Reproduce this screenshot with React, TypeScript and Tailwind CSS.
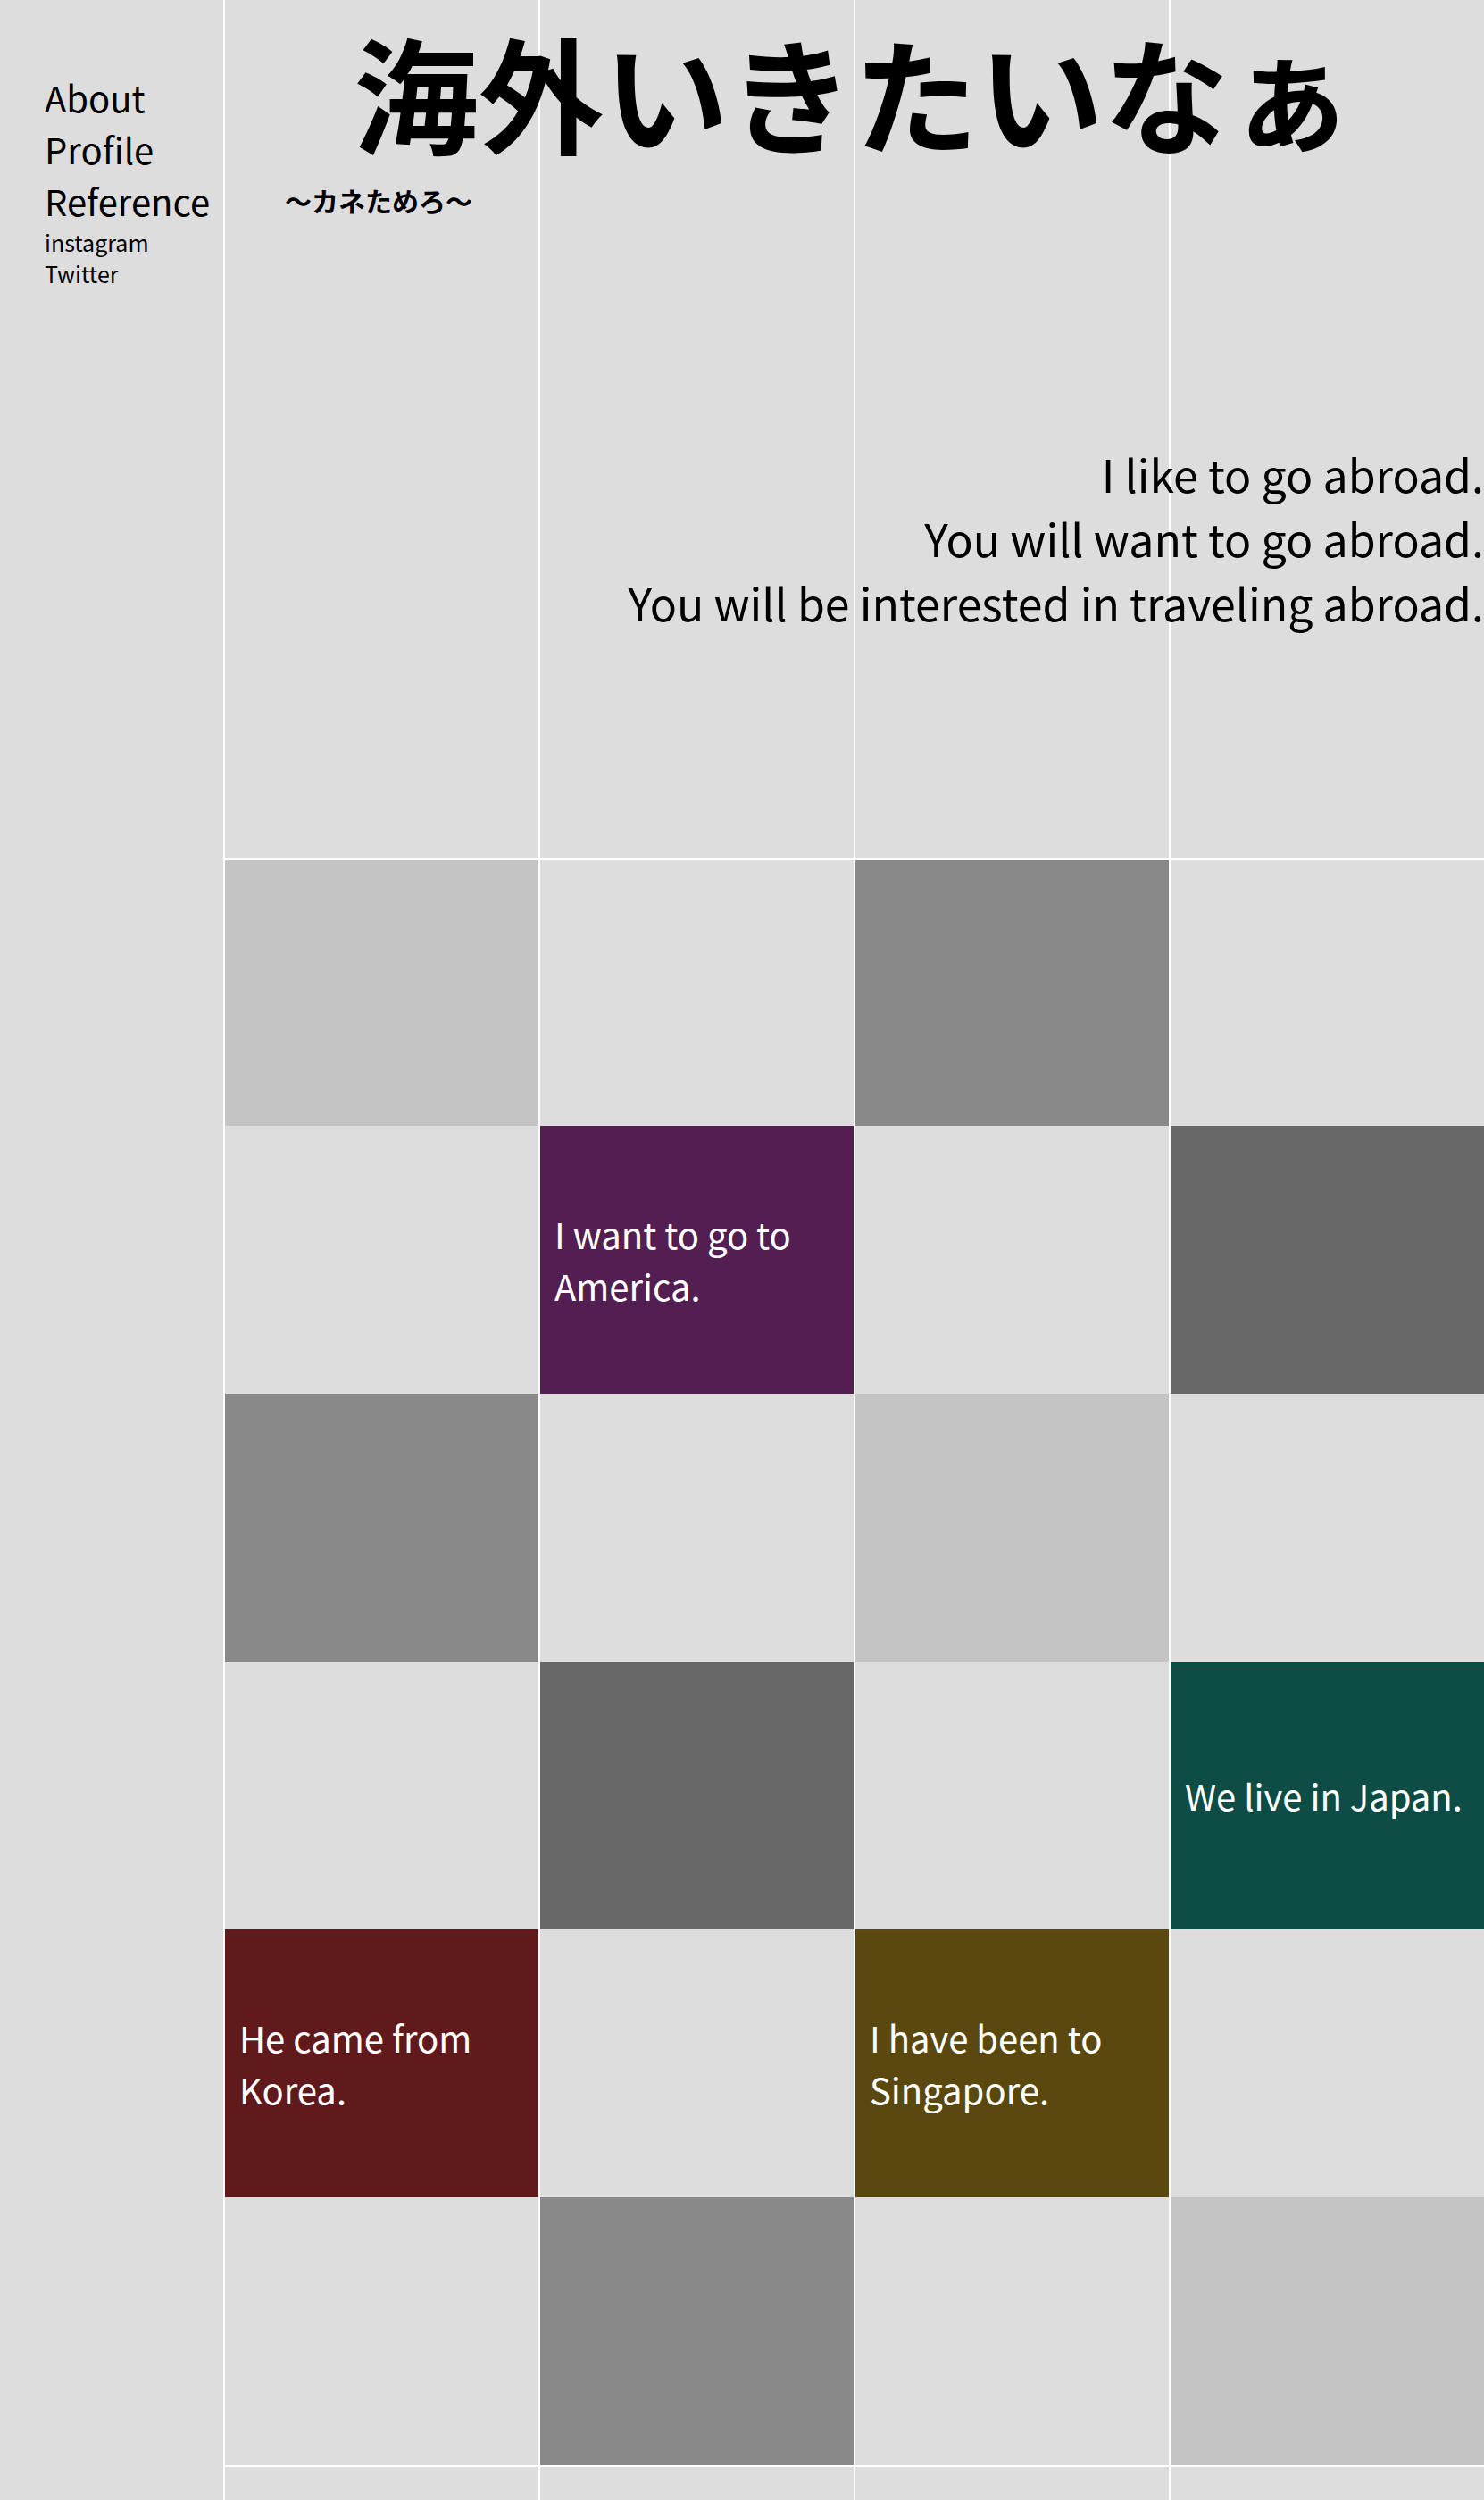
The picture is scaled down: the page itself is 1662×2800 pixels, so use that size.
import React from 'react'

const LIGHT = 'bg-[#dddddd]'

type Cell = { bg: string; text?: string }

const rows: Cell[][] = [
  [{ bg: 'bg-[#c4c4c4]' }, { bg: LIGHT }, { bg: 'bg-[#898989]' }, { bg: LIGHT }],
  [{ bg: LIGHT }, { bg: 'bg-[#531e52]', text: 'I want to go to America.' }, { bg: LIGHT }, { bg: 'bg-[#686868]' }],
  [{ bg: 'bg-[#898989]' }, { bg: LIGHT }, { bg: 'bg-[#c4c4c4]' }, { bg: LIGHT }],
  [{ bg: LIGHT }, { bg: 'bg-[#686868]' }, { bg: LIGHT }, { bg: 'bg-[#0e4c46]', text: 'We live in Japan.' }],
  [{ bg: 'bg-[#601a1c]', text: 'He came from Korea.' }, { bg: LIGHT }, { bg: 'bg-[#5a480e]', text: 'I have been to Singapore.' }, { bg: LIGHT }],
  [{ bg: LIGHT }, { bg: 'bg-[#898989]' }, { bg: LIGHT }, { bg: 'bg-[#c4c4c4]' }],
]

const font = { fontFamily: '"Noto Sans CJK JP", "Noto Sans", sans-serif' }

function Tile({ cell }: { cell: Cell }) {
  return (
    <div className={`border-l-2 border-white flex items-center px-4 ${cell.bg}`}>
      {cell.text && <p className="text-[40px] leading-[58px] text-white">{cell.text}</p>}
    </div>
  )
}

export default function App() {
  return (
    <div className="flex min-h-[2800px] bg-[#dddddd] text-black" style={font}>
      <nav className="w-[250px] shrink-0 pl-[50px] pt-[80px]">
        <ul className="text-[40px] leading-[58px]">
          <li>About</li>
          <li>Profile</li>
          <li>Reference</li>
        </ul>
        <ul className="text-[25px] leading-[35px]">
          <li>instagram</li>
          <li>Twitter</li>
        </ul>
      </nav>

      <main className="flex-1">
        <header className="relative h-[961px]">
          <div className="grid grid-cols-4 h-full">
            {[0, 1, 2, 3].map((i) => (
              <div key={i} className="border-l-2 border-white" />
            ))}
          </div>
          <div className="absolute inset-0 flex flex-col">
            <h1 className="text-center text-[140px] leading-[203px] font-bold">海外いきたいなぁ</h1>
            <div className="pl-[69px] text-[30px] leading-[43px] font-bold">〜カネためろ〜</div>
            <div className="mt-[248px] text-right text-[50px] leading-[72px]">
              <p>I like to go abroad.</p>
              <p>You will want to go abroad.</p>
              <p>You will be interested in traveling abroad.</p>
            </div>
          </div>
        </header>

        <section className="grid grid-cols-4 grid-rows-[298px_repeat(5,300px)] border-t-2 border-white">
          {rows.map((row, r) => row.map((cell, c) => <Tile key={`${r}-${c}`} cell={cell} />))}
        </section>

        <section className="grid grid-cols-4 grid-rows-[298px] border-t-2 border-white">
          {[0, 1, 2, 3].map((i) => (
            <Tile key={i} cell={{ bg: LIGHT }} />
          ))}
        </section>
      </main>
    </div>
  )
}
